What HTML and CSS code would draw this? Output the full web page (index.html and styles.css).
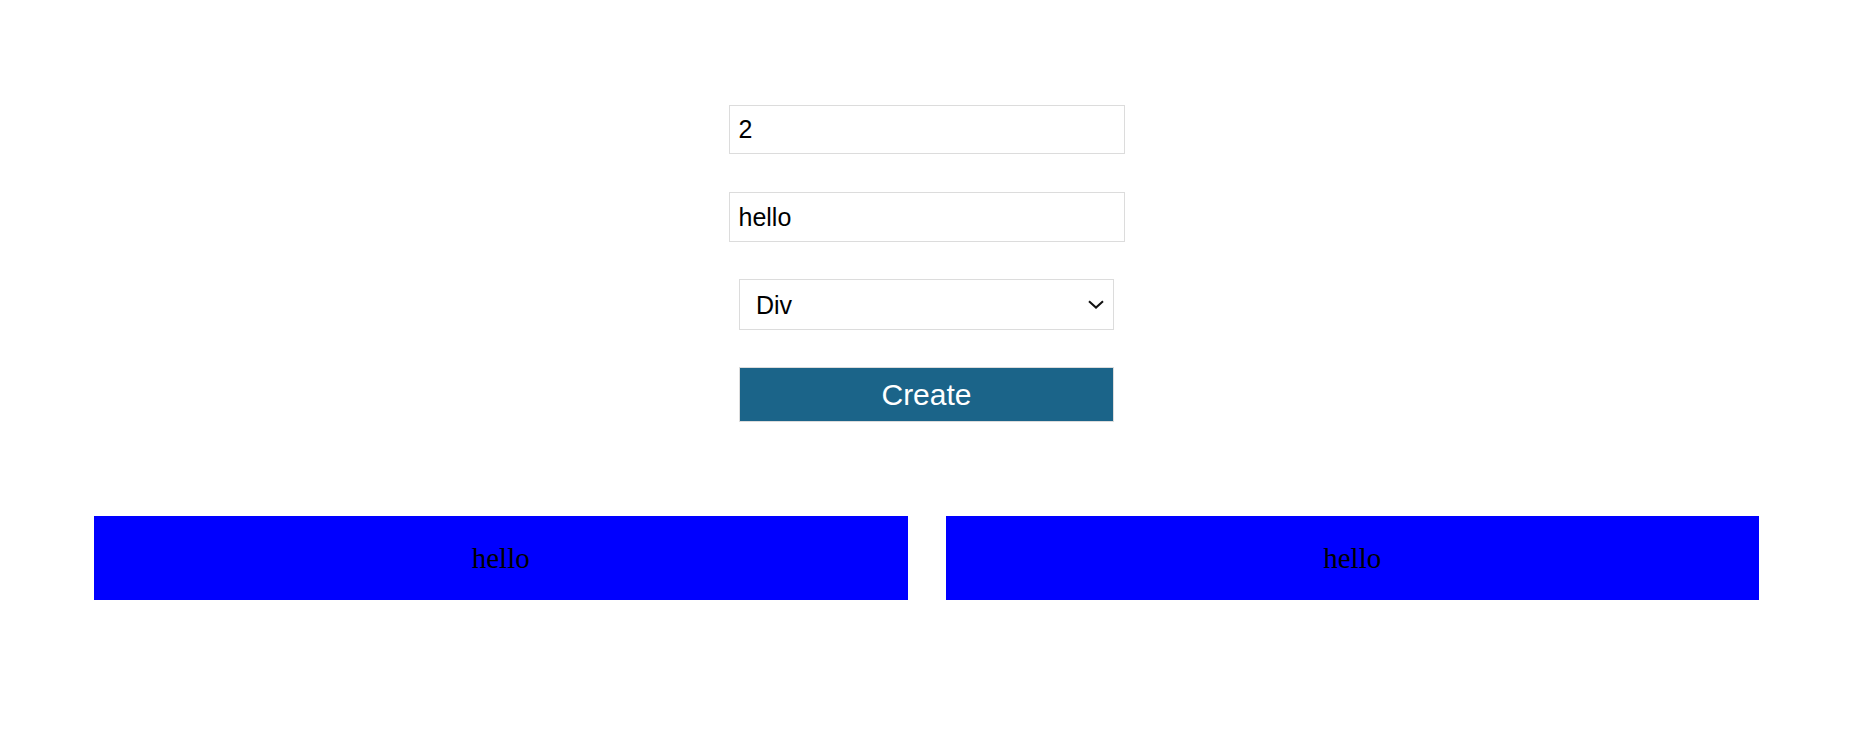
FILE: index.html
```html
<!DOCTYPE html>
<html>
<head>
<meta charset="utf-8">
<link rel="stylesheet" href="styles.css">
</head>
<body>
<div class="page">
  <form class="form">
    <input class="field field-count" type="text" value="2">
    <input class="field field-text" type="text" value="hello">
    <div class="select-wrap">
      <select class="select">
        <option>Div</option>
        <option>Span</option>
        <option>Paragraph</option>
      </select>
      <svg class="chevron" width="16" height="9" viewBox="0 0 16 9"><path d="M1 1.2 L8 7.6 L15 1.2" fill="none" stroke="#111" stroke-width="2"/></svg>
    </div>
    <button class="create" type="button">Create</button>
  </form>
  <div class="output">
    <div class="item">hello</div>
    <div class="item">hello</div>
  </div>
</div>
</body>
</html>
```

FILE: styles.css
```css
html, body {
  margin: 0;
  padding: 0;
  background: #ffffff;
}

.page {
  width: 1853px;
  padding-top: 105px;
}

.form {
  display: flex;
  flex-direction: column;
  align-items: center;
  margin: 0;
}

.field {
  box-sizing: border-box;
  width: 396px;
  margin: 0;
  padding: 0 9px;
  border: 1px solid #dcdcdc;
  border-radius: 0;
  outline: none;
  font-family: "Liberation Sans", Arial, sans-serif;
  font-size: 25px;
  color: #000;
  background: #fff;
}

.field-count {
  height: 49px;
}

.field-text {
  height: 50px;
  margin-top: 38px;
}

.select-wrap {
  position: relative;
  width: 375px;
  height: 51px;
  margin-top: 37px;
}

.select {
  box-sizing: border-box;
  width: 100%;
  height: 100%;
  margin: 0;
  padding: 0 40px 0 16px;
  border: 1px solid #dcdcdc;
  border-radius: 0;
  appearance: none;
  -webkit-appearance: none;
  background: #fff;
  font-family: "Liberation Sans", Arial, sans-serif;
  font-size: 25px;
  color: #000;
  outline: none;
}

.chevron {
  position: absolute;
  right: 10px;
  top: 21px;
  pointer-events: none;
}

.create {
  box-sizing: border-box;
  width: 375px;
  height: 55px;
  margin-top: 37px;
  padding: 0;
  border: 1px solid #dcdcdc;
  border-radius: 0;
  background: #1b6489;
  color: #ffffff;
  font-family: "Liberation Sans", Arial, sans-serif;
  font-size: 30px;
  cursor: pointer;
}

.output {
  display: grid;
  grid-template-columns: 1fr 1fr;
  column-gap: 38px;
  padding: 0 94px;
  margin-top: 94px;
}

.item {
  height: 84px;
  display: flex;
  align-items: center;
  justify-content: center;
  background: #0000ff;
  color: #000;
  font-family: "Liberation Serif", "Times New Roman", serif;
  font-size: 29px;
}
```
